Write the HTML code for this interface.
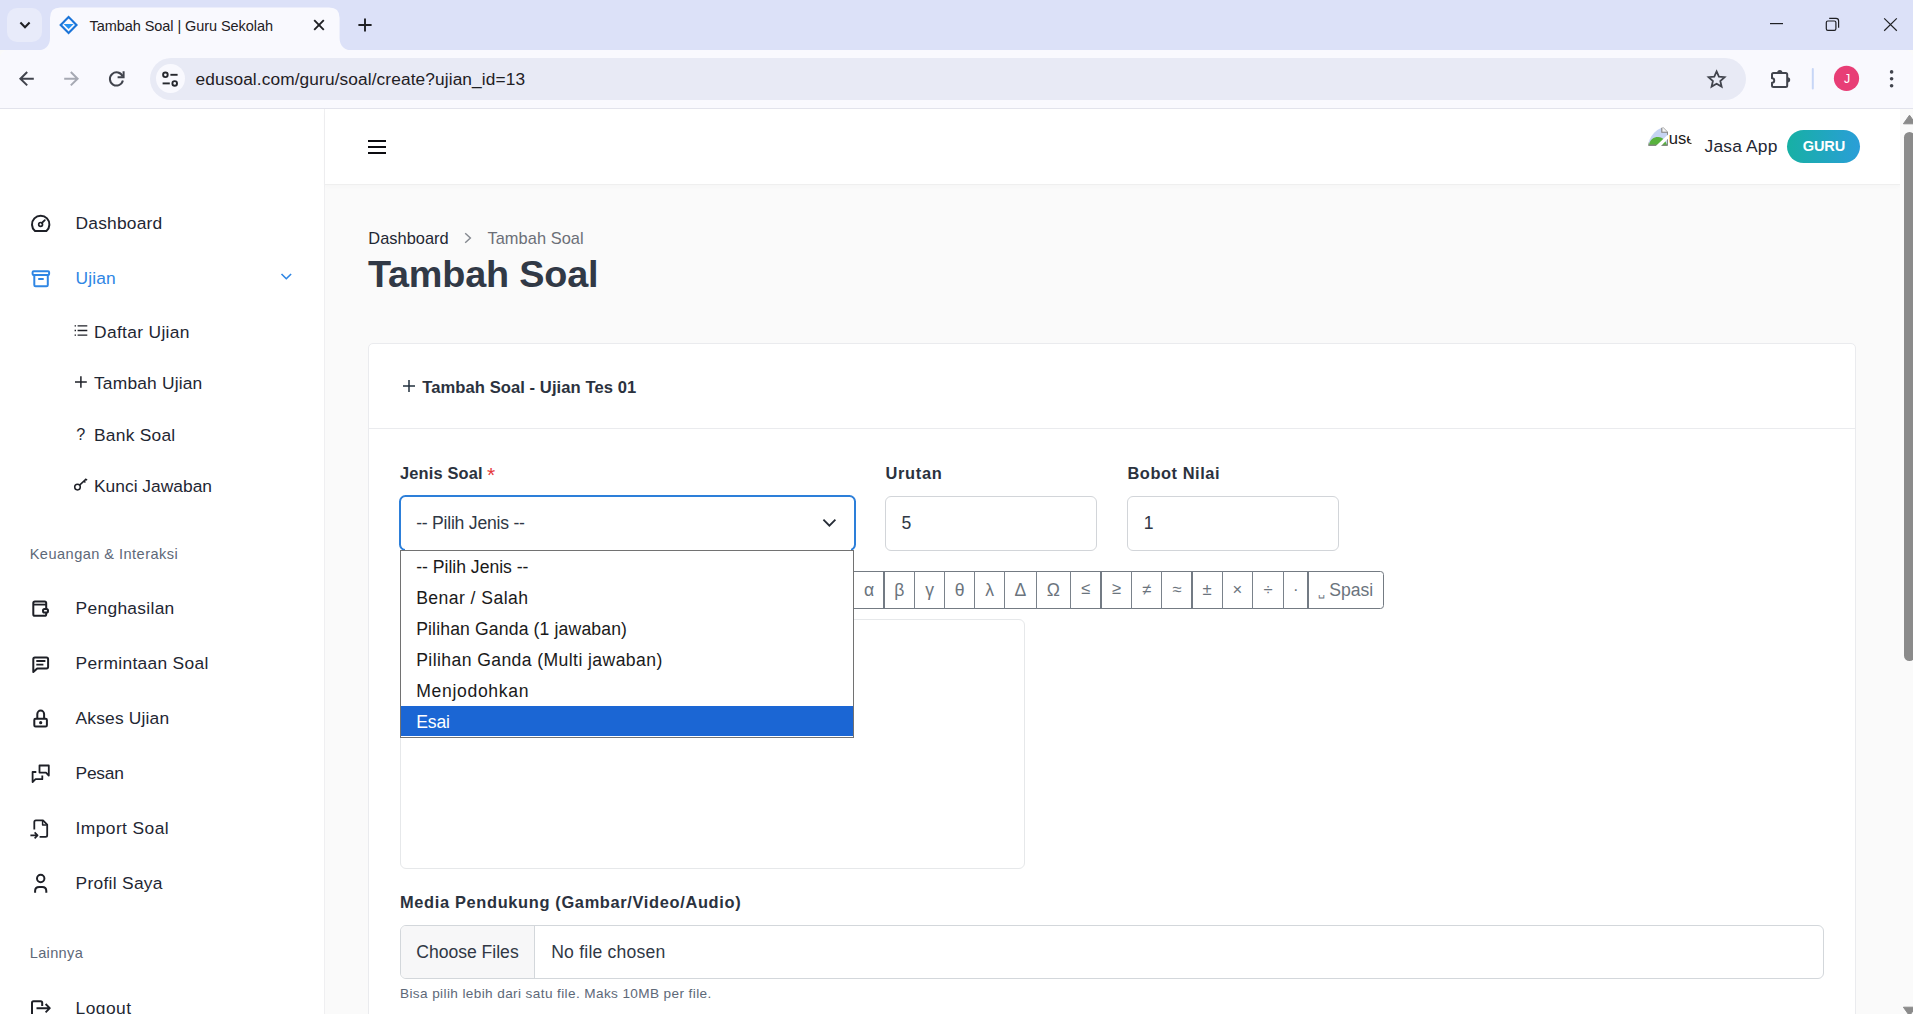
<!DOCTYPE html>
<html lang="id">
<head>
<meta charset="utf-8">
<title>Tambah Soal | Guru Sekolah</title>
<style>
*{box-sizing:border-box;margin:0;padding:0}
html,body{width:1913px;height:1014px;overflow:hidden;background:#fafafa;font-family:"Liberation Sans",sans-serif;color:#22303e}
.a{position:absolute;white-space:nowrap}
.t{position:absolute;white-space:pre;line-height:1}
svg{position:absolute;overflow:visible}
#tabstrip{left:0;top:0;width:1913px;height:50px;background:#dce1f8}
#toolbar{left:0;top:50px;width:1913px;height:58px;background:#f9f9fe;border-radius:8px 8px 0 0}
#tbline{left:0;top:108px;width:1913px;height:1px;background:#e2e3ec}
#tabsearch{left:7px;top:8px;width:34.5px;height:34px;background:#e8ebfa;border-radius:10px}
#urlbar{left:149.5px;top:58.3px;width:1596.5px;height:41.4px;background:#e8eaf5;border-radius:21px}
#sitechip{left:155.8px;top:64.4px;width:29px;height:29px;background:#f9f9fe;border-radius:50%}
#sidebar{left:0;top:109px;width:325px;height:905px;background:#fff;border-right:1px solid #efeff1}
#header{left:325px;top:109px;width:1575px;height:76px;background:#fff;border-bottom:1px solid #efefef;box-shadow:0 2px 4px rgba(0,0,0,.018)}
#card{left:368px;top:343px;width:1488px;height:700px;background:#fff;border:1px solid #eaebee;border-radius:5px}
#cardline{left:369px;top:428px;width:1486px;height:1px;background:#eaebee}
</style>
</head>
<body>
<!-- ===== Browser chrome ===== -->
<div class="a" id="tabstrip"></div>
<div class="a" id="toolbar"></div>
<svg style="left:0;top:0" width="400" height="51" viewBox="0 0 400 51"><path d="M36.5 50.5 C45 50.5 50 46 50 38 V18 Q50 7.6 60.4 7.6 H329.2 Q339.6 7.6 339.6 18 V38 C339.6 46 344.6 50.5 353 50.5 Z" fill="#f9f9fe"/></svg>
<div class="a" id="tabsearch"></div>
<div class="a" id="tbline"></div>
<div class="a" id="urlbar"></div>
<div class="a" id="sitechip"></div>
<svg style="left:0;top:0" width="1913" height="109" viewBox="0 0 1913 109" fill="none" stroke="#1f2024" stroke-width="2" stroke-linecap="butt" stroke-linejoin="miter">
<!-- tab search chevron -->
<path d="M20.4 22.6 L25 27.2 L29.6 22.6" stroke-width="2.1"/>
<!-- favicon -->
<g stroke="none">
<path d="M68.6 15.4 L78 24.9 L68.6 34.4 L59.2 24.9 Z" fill="#1b74d8"/>
<path d="M68.6 18.4 L75 24.9 L68.6 31.4 L62.2 24.9 Z" fill="#f9f9fe"/>
<path d="M63.6 24 H73.6 L68.6 29 Z" fill="#2491f2"/>
<path d="M65.6 22 L68.6 19 L71.6 22 Z" fill="#f9f9fe"/>
</g>
<!-- tab close -->
<path d="M314.2 20.2 L323.8 29.8 M323.8 20.2 L314.2 29.8" stroke-width="1.9"/>
<!-- new tab -->
<path d="M365 18.4 V31.6 M358.4 25 H371.6" stroke-width="1.9"/>
<!-- window controls -->
<path d="M1770 23.6 H1783" stroke-width="1.2"/>
<rect x="1826.3" y="21" width="9.6" height="9.4" rx="1.6" stroke-width="1.2"/>
<path d="M1829.2 18.4 H1836 Q1838.6 18.4 1838.6 21 V27.8" stroke-width="1.2"/>
<path d="M1884.2 18.4 L1896.8 30.8 M1896.8 18.4 L1884.2 30.8" stroke-width="1.2"/>
<!-- back -->
<g stroke="#41444d" stroke-width="2">
<path d="M33.8 78.7 H21 M27.2 72 L20.4 78.7 L27.2 85.4"/>
</g>
<!-- forward -->
<g stroke="#a6a9b3" stroke-width="2">
<path d="M64.2 78.7 H77 M70.8 72 L77.6 78.7 L70.8 85.4"/>
</g>
<!-- reload -->
<g stroke="#41444d" stroke-width="2">
<path d="M122.6 76.4 A6.6 6.6 0 1 0 122.9 80.6"/>
<path d="M123.6 71.2 V77.2 H117.6" />
</g>
<!-- site settings (tune) -->
<g stroke="#26282e" stroke-width="1.9">
<circle cx="165.4" cy="74.8" r="2.3"/>
<path d="M170.4 74.8 H177.6"/>
<circle cx="174.7" cy="83.4" r="2.3"/>
<path d="M162.6 83.4 H169.8"/>
</g>
<!-- star -->
<path d="M1716.6 71.4 L1718.9 76.6 L1724.6 77.2 L1720.3 81 L1721.6 86.6 L1716.6 83.7 L1711.6 86.6 L1712.9 81 L1708.6 77.2 L1714.3 76.6 Z" stroke="#41444d" stroke-width="1.8" stroke-linejoin="miter"/>
<!-- extensions puzzle -->
<path d="M1773.5 72.9 H1785.7 Q1787.2 72.9 1787.2 74.4 V85.5 Q1787.2 87 1785.7 87 H1773.5 Q1772 87 1772 85.5 V82.7 A2.2 2.2 0 0 0 1772 78.3 V74.4 Q1772 72.9 1773.5 72.9 Z" stroke="#41444d" stroke-width="2" stroke-linejoin="round"/>
<path d="M1777.2 72.6 A2.6 2.6 0 0 1 1782.4 72.6 Z M1787.6 77.2 A2.6 2.6 0 0 1 1787.6 82.4 Z" fill="#41444d" stroke="none"/>
<!-- separator -->
<path d="M1812.8 69 V88.4" stroke="#c7d6f6" stroke-width="2" stroke-linecap="round"/>
<!-- avatar -->
<circle cx="1846.5" cy="78.4" r="12.6" fill="#e83e76" stroke="none"/>
<!-- menu dots -->
<g fill="#41444d" stroke="none"><circle cx="1891.6" cy="71.9" r="1.8"/><circle cx="1891.6" cy="78.8" r="1.8"/><circle cx="1891.6" cy="85.7" r="1.8"/></g>
</svg>

<!-- ===== Page ===== -->
<div class="a" id="sidebar"></div>
<div class="a" id="header"></div>
<div class="a" id="card"></div>
<div class="a" id="cardline"></div>
<div class="a" style="left:367.5px;top:139.6px;width:18.8px;height:2.1px;background:#0c0c10"></div>
<div class="a" style="left:367.5px;top:145.9px;width:18.8px;height:2.1px;background:#0c0c10"></div>
<div class="a" style="left:367.5px;top:152.1px;width:18.8px;height:2.1px;background:#0c0c10"></div>
<div class="a" style="left:1786.7px;top:129.7px;width:73.3px;height:33.3px;border-radius:17px;background:linear-gradient(90deg,#17b0a4,#2a9ed8)"></div>
<div class="a" style="left:400px;top:619px;width:625.0px;height:250.0px;border:1px solid #e6e8ea;border-radius:6px;background:#fff"></div>
<div class="a" style="left:885px;top:496px;width:212.3px;height:55.0px;border:1px solid #d2d5d9;border-radius:6px;background:#fff"></div>
<div class="a" style="left:1127px;top:496px;width:212.0px;height:55.0px;border:1px solid #d2d5d9;border-radius:6px;background:#fff"></div>
<div class="a" style="left:700px;top:571px;width:684.0px;height:38px;border:1px solid #747b83;border-radius:3.5px;background:#fff"></div>
<div class="a" style="left:853px;top:571px;width:1.0px;height:38.0px;background:#7a828b"></div>
<div class="a" style="left:883px;top:571px;width:2.0px;height:38.0px;background:#737b84"></div>
<div class="a" style="left:914px;top:571px;width:1.0px;height:38.0px;background:#7a828b"></div>
<div class="a" style="left:944px;top:571px;width:1.0px;height:38.0px;background:#7a828b"></div>
<div class="a" style="left:974px;top:571px;width:1.0px;height:38.0px;background:#7a828b"></div>
<div class="a" style="left:1004px;top:571px;width:1.0px;height:38.0px;background:#7a828b"></div>
<div class="a" style="left:1036px;top:571px;width:1.0px;height:38.0px;background:#7a828b"></div>
<div class="a" style="left:1070px;top:571px;width:1.0px;height:38.0px;background:#7a828b"></div>
<div class="a" style="left:1100px;top:571px;width:2.0px;height:38.0px;background:#737b84"></div>
<div class="a" style="left:1131px;top:571px;width:1.0px;height:38.0px;background:#7a828b"></div>
<div class="a" style="left:1161px;top:571px;width:1.0px;height:38.0px;background:#7a828b"></div>
<div class="a" style="left:1191px;top:571px;width:2.0px;height:38.0px;background:#737b84"></div>
<div class="a" style="left:1222px;top:571px;width:1.0px;height:38.0px;background:#7a828b"></div>
<div class="a" style="left:1252px;top:571px;width:1.0px;height:38.0px;background:#7a828b"></div>
<div class="a" style="left:1283px;top:571px;width:1.0px;height:38.0px;background:#7a828b"></div>
<div class="a" style="left:1307px;top:571px;width:2.0px;height:38.0px;background:#737b84"></div>
<div class="a" style="left:400px;top:925px;width:1424.0px;height:53.5px;border:1px solid #d3d7db;border-radius:6px;background:#fff"></div>
<div class="a" style="left:401px;top:926px;width:133.5px;height:51.5px;background:#f7f7f8;border-radius:5px 0 0 5px;border-right:1px solid #d3d7db"></div>
<div class="a" style="left:398.8px;top:494.8px;width:457.4px;height:56.2px;border:2.2px solid #2d7fd9;border-radius:6.5px;background:#fff"></div>
<div class="a" style="left:405px;top:548px;width:446.0px;height:2.2px;background:#fff"></div>
<div class="a" style="left:400px;top:550px;width:454.0px;height:188.0px;border:1px solid #727272;background:#fff"></div>
<div class="a" style="left:401px;top:706px;width:452.0px;height:30.3px;background:#1b66d4"></div>

<svg style="left:0;top:109px" width="325" height="905" viewBox="0 109 325 905" fill="none" stroke="#1e2027" stroke-width="2" stroke-linecap="butt" stroke-linejoin="round">
<!-- dashboard (tachometer) -->
<path d="M35 231 A8.7 8.7 0 1 1 46.4 231 Z"/>
<circle cx="40.6" cy="224.4" r="1.9" stroke-width="1.7"/>
<path d="M41.8 223 L44.8 220.2" stroke-width="1.8" stroke-linecap="round"/>
<!-- ujian (archive) -->
<g stroke="#2f86e4">
<rect x="32.6" y="271.2" width="16.5" height="3.8" rx="1"/>
<path d="M34.3 275 V285 Q34.3 286.3 35.6 286.3 H46.5 Q47.8 286.3 47.8 285 V275"/>
<path d="M38.2 279 H43.7"/>
<path d="M281.5 274 L286.3 278.8 L291.1 274" stroke-width="1.6"/>
</g>
<!-- sub: list -->
<g stroke-width="1.4">
<path d="M77.6 325.9 H87.3 M77.6 330.5 H87.3 M77.6 335.1 H87.3"/>
<path d="M74.6 325.9 H76 M74.6 330.5 H76 M74.6 335.1 H76"/>
</g>
<!-- sub: plus -->
<path d="M80.9 376.2 V387.8 M75 382 H86.8" stroke-width="1.5"/>
<!-- sub: key -->
<g stroke-width="1.5">
<circle cx="77.5" cy="487.1" r="2.8"/>
<path d="M79.6 485.1 L86.3 478.9 M84 480.9 L85.4 482.5 M86 479.2 L87 480.3"/>
</g>
<!-- wallet -->
<path d="M33.3 603 Q33.3 601.4 34.9 601.4 H44.6 Q46.2 601.4 46.2 603 V614.2 Q46.2 615.8 44.6 615.8 H34.9 Q33.3 615.8 33.3 614.2 Z"/>
<path d="M33.3 604.6 H46.2" stroke-width="1.8"/>
<rect x="43" y="609" width="5" height="3.6" rx="1.6" fill="#fff"/>
<!-- message detail -->
<path d="M33.3 672 V659.2 Q33.3 657.6 34.9 657.6 H46.5 Q48.1 657.6 48.1 659.2 V666.8 Q48.1 668.4 46.5 668.4 H37.2 Z"/>
<path d="M36.3 661 H45.4 M36.3 664.6 H43.4" stroke-width="1.8"/>
<!-- lock -->
<rect x="34.3" y="718.8" width="12.6" height="7.8" rx="1.3"/>
<path d="M37.3 718.8 V714 A3.4 3.4 0 0 1 44.1 714 V718.8"/>
<circle cx="40.7" cy="722.7" r="1.6" fill="#1e2027" stroke="none"/>
<!-- chat / conversation -->
<g stroke-width="1.8">
<path d="M39.5 765.5 H48.8 V775.6 L46 772.6 H39.5 Z"/>
<path d="M36.3 772 H32.6 V782 L35.6 779.2 H42.3 V775.4"/>
</g>
<!-- import -->
<g stroke-width="1.8">
<path d="M34.3 829.6 V822 Q34.3 820.4 35.9 820.4 H43 L47.2 824.6 V835.2 Q47.2 836.8 45.6 836.8 H39.6"/>
<path d="M42.6 820.8 V825 H46.8" stroke-width="1.5"/>
<path d="M30.4 835.4 H37.4 M34.6 832.4 L37.6 835.4 L34.6 838.4" stroke-width="1.6"/>
</g>
<!-- user -->
<circle cx="40.7" cy="878.5" r="3.7"/>
<path d="M35.1 892.8 V891 Q35.1 886.9 39.2 886.9 H42.2 Q46.3 886.9 46.3 891 V892.8"/>
<!-- logout -->
<path d="M42.2 1006 V1002.8 Q42.2 1001.3 40.7 1001.3 H33.5 Q32 1001.3 32 1002.8 V1014"/>
<path d="M36.5 1008.2 H49.5 M45.6 1004 L49.8 1008.2 L45.6 1012.4" stroke-width="1.9"/>
</svg>

<div id="chrome-text">
<div class="t" style="left:89.6px;top:19.05px;font-size:14.5px;color:#1f2024;letter-spacing:-0.069px;">Tambah Soal | Guru Sekolah</div>
<div class="t" style="left:195.5px;top:70.65px;font-size:17.3px;color:#1f2024;letter-spacing:0.110px;">edusoal.com/guru/soal/create?ujian_id=13</div>
<div class="t" style="left:1843.9px;top:73.05px;font-size:12.5px;color:#ffffff;">J</div>
</div>
<nav id="menu">
<div class="t" style="left:75.6px;top:214.60px;font-size:17.4px;color:#1f2733;letter-spacing:0.190px;">Dashboard</div>
<div class="t" style="left:75.6px;top:269.60px;font-size:17.4px;color:#2f86e4;letter-spacing:0.090px;">Ujian</div>
<div class="t" style="left:94.0px;top:323.60px;font-size:17.4px;color:#1f2733;letter-spacing:0.334px;">Daftar Ujian</div>
<div class="t" style="left:94.0px;top:374.60px;font-size:17.4px;color:#1f2733;letter-spacing:0.178px;">Tambah Ujian</div>
<div class="t" style="left:94.0px;top:426.60px;font-size:17.4px;color:#1f2733;letter-spacing:0.240px;">Bank Soal</div>
<div class="t" style="left:94.0px;top:477.60px;font-size:17.4px;color:#1f2733;letter-spacing:0.004px;">Kunci Jawaban</div>
<div class="t" style="left:29.7px;top:547.00px;font-size:14.6px;color:#5d6878;letter-spacing:0.450px;">Keuangan &amp; Interaksi</div>
<div class="t" style="left:75.6px;top:599.60px;font-size:17.4px;color:#1f2733;letter-spacing:0.297px;">Penghasilan</div>
<div class="t" style="left:75.6px;top:654.60px;font-size:17.4px;color:#1f2733;letter-spacing:0.294px;">Permintaan Soal</div>
<div class="t" style="left:75.6px;top:709.60px;font-size:17.4px;color:#1f2733;letter-spacing:0.167px;">Akses Ujian</div>
<div class="t" style="left:75.6px;top:764.60px;font-size:17.4px;color:#1f2733;letter-spacing:-0.253px;">Pesan</div>
<div class="t" style="left:75.6px;top:819.60px;font-size:17.4px;color:#1f2733;letter-spacing:0.406px;">Import Soal</div>
<div class="t" style="left:75.6px;top:874.60px;font-size:17.4px;color:#1f2733;letter-spacing:0.281px;">Profil Saya</div>
<div class="t" style="left:29.7px;top:946.00px;font-size:14.6px;color:#5d6878;letter-spacing:0.329px;">Lainnya</div>
<div class="t" style="left:75.6px;top:999.60px;font-size:17.4px;color:#1f2733;letter-spacing:0.439px;">Logout</div>
<div class="t" style="left:76.3px;top:426.20px;font-size:16.2px;color:#1f2733;">?</div>
</nav>
<header id="topbar">
<div class="t" style="left:1704.6px;top:137.60px;font-size:17.4px;color:#1f2733;letter-spacing:0.177px;">Jasa App</div>
<div class="t" style="left:1802.8px;top:139.00px;font-size:14.6px;font-weight:700;color:#ffffff;letter-spacing:-0.195px;">GURU</div>
</header>
<main id="content">
<div class="t" style="left:368.3px;top:230.10px;font-size:16.4px;color:#1f2733;letter-spacing:0.027px;">Dashboard</div>
<div class="t" style="left:487.4px;top:230.10px;font-size:16.4px;color:#6b6f77;letter-spacing:0.063px;">Tambah Soal</div>
<div class="t" style="left:367.9px;top:256.40px;font-size:37.8px;font-weight:700;color:#313946;letter-spacing:-0.174px;">Tambah Soal</div>
<div class="t" style="left:422.2px;top:379.50px;font-size:16.6px;font-weight:700;color:#2b323e;letter-spacing:0.064px;">Tambah Soal - Ujian Tes 01</div>
<div class="t" style="left:400.0px;top:465.10px;font-size:16.4px;font-weight:700;color:#2b323e;letter-spacing:0.156px;">Jenis Soal</div>
<div class="t" style="left:487.0px;top:464.30px;font-size:21px;color:#e5383b;">*</div>
<div class="t" style="left:885.5px;top:465.10px;font-size:16.4px;font-weight:700;color:#2b323e;letter-spacing:0.694px;">Urutan</div>
<div class="t" style="left:1127.4px;top:465.10px;font-size:16.4px;font-weight:700;color:#2b323e;letter-spacing:0.570px;">Bobot Nilai</div>
<div class="t" style="left:416.2px;top:514.50px;font-size:17.6px;color:#303845;letter-spacing:-0.233px;">-- Pilih Jenis --</div>
<div class="t" style="left:901.4px;top:514.50px;font-size:17.6px;color:#303845;">5</div>
<div class="t" style="left:1143.7px;top:514.50px;font-size:17.6px;color:#303845;">1</div>
<div class="t" style="left:416.2px;top:558.50px;font-size:17.6px;color:#1a1a1a;letter-spacing:-0.008px;">-- Pilih Jenis --</div>
<div class="t" style="left:416.2px;top:589.50px;font-size:17.6px;color:#1a1a1a;letter-spacing:0.431px;">Benar / Salah</div>
<div class="t" style="left:416.2px;top:620.50px;font-size:17.6px;color:#1a1a1a;letter-spacing:0.143px;">Pilihan Ganda (1 jawaban)</div>
<div class="t" style="left:416.2px;top:651.50px;font-size:17.6px;color:#1a1a1a;letter-spacing:0.406px;">Pilihan Ganda (Multi jawaban)</div>
<div class="t" style="left:416.2px;top:682.50px;font-size:17.6px;color:#1a1a1a;letter-spacing:0.666px;">Menjodohkan</div>
<div class="t" style="left:416.2px;top:713.50px;font-size:17.6px;color:#ffffff;letter-spacing:-0.145px;">Esai</div>
<div class="t" style="left:400.0px;top:894.10px;font-size:16.4px;font-weight:700;color:#2b323e;letter-spacing:0.659px;">Media Pendukung (Gambar/Video/Audio)</div>
<div class="t" style="left:416.2px;top:943.50px;font-size:17.6px;color:#303845;letter-spacing:-0.017px;">Choose Files</div>
<div class="t" style="left:551.2px;top:943.50px;font-size:17.6px;color:#303845;letter-spacing:0.208px;">No file chosen</div>
<div class="t" style="left:400.0px;top:987.00px;font-size:13.6px;color:#5d6878;letter-spacing:0.385px;">Bisa pilih lebih dari satu file. Maks 10MB per file.</div>
<div class="t" style="left:863.9px;top:581.50px;font-size:17.6px;color:#6b747d;">α</div>
<div class="t" style="left:894.3px;top:581.50px;font-size:17.6px;color:#6b747d;">β</div>
<div class="t" style="left:925.2px;top:581.50px;font-size:17.6px;color:#6b747d;">γ</div>
<div class="t" style="left:954.7px;top:581.50px;font-size:17.6px;color:#6b747d;">θ</div>
<div class="t" style="left:985.2px;top:581.50px;font-size:17.6px;color:#6b747d;">λ</div>
<div class="t" style="left:1014.6px;top:581.50px;font-size:17.6px;color:#6b747d;">Δ</div>
<div class="t" style="left:1046.7px;top:581.50px;font-size:17.6px;color:#6b747d;">Ω</div>
<div class="t" style="left:1081.1px;top:580.50px;font-size:16.6px;color:#6b747d;">≤</div>
<div class="t" style="left:1111.8px;top:580.50px;font-size:16.6px;color:#6b747d;">≥</div>
<div class="t" style="left:1142.0px;top:581.50px;font-size:16.6px;color:#6b747d;">≠</div>
<div class="t" style="left:1172.2px;top:581.50px;font-size:16.6px;color:#6b747d;">≈</div>
<div class="t" style="left:1202.6px;top:581.50px;font-size:16.6px;color:#6b747d;">±</div>
<div class="t" style="left:1232.6px;top:581.50px;font-size:16.6px;color:#6b747d;">×</div>
<div class="t" style="left:1263.5px;top:581.50px;font-size:16.6px;color:#6b747d;">÷</div>
<div class="t" style="left:1293.1px;top:581.50px;font-size:16.6px;color:#6b747d;">·</div>
<div class="t" style="left:1317.5px;top:586.80px;font-size:11px;color:#6b747d;font-family:"DejaVu Sans",sans-serif;">␣</div>
<div class="t" style="left:1329.3px;top:581.50px;font-size:17.6px;color:#6b747d;letter-spacing:-0.054px;">Spasi</div>
</main>
<!-- scrollbar -->
<div class="a" style="left:1900px;top:109px;width:13px;height:905px;background:#fafafa"></div>
<div class="a" style="left:1904px;top:132px;width:11px;height:529px;background:#8b8b8b;border-radius:5.5px"></div>
<svg style="left:1900px;top:109px" width="13" height="905" viewBox="0 0 13 905"><path d="M3.4 14.8 L9.5 6.2 L15.6 14.8 Z" fill="#8b8b8b" stroke="#8b8b8b" stroke-width="1" stroke-linejoin="round"/><path d="M3.4 898.2 L9.5 906.8 L15.6 898.2 Z" fill="#8b8b8b" stroke="#8b8b8b" stroke-width="1" stroke-linejoin="round"/></svg>
<!-- avatar (broken image with alt text) -->
<div class="a" style="left:1648px;top:126px;width:44px;height:44px;border-radius:50%;overflow:hidden">
<svg style="left:0;top:0" width="20" height="20" viewBox="0 0 20 20"><path d="M0.5 0.5 H14 L19.5 6 V19.5 H0.5 Z" fill="#fff" stroke="#8c8c8c" stroke-width="1"/><path d="M1 1 H13.5 V6.5 H19 V19 H1 Z" fill="#c6d4f3"/><path d="M13.8 0.8 V6.2 H19.2" fill="#f4f4f4" stroke="#7d7d7d" stroke-width="1.1"/><path d="M1 19 C2 12 9 9.6 14 12 C16.5 13.4 18 16 19 19 Z" fill="#58b23d"/><path d="M0.5 19 H19.5" stroke="#7b8a76" stroke-width="1"/><path d="M20 8.4 L7.8 20 H13 L20 12.8 Z" fill="#fff"/></svg>
<div class="t" style="left:20.8px;top:4.7px;font-size:16.6px;color:#1b1b1b">user</div>
</div>
<!-- hamburger drawn in shapes; breadcrumb chevron -->
<svg style="left:461px;top:231px" width="14" height="14" viewBox="0 0 14 14"><path d="M4.2 2.2 L9.4 7 L4.2 11.8" fill="none" stroke="#84888f" stroke-width="1.4"/></svg>
<!-- card header plus -->
<svg style="left:403px;top:380px" width="12" height="12" viewBox="0 0 12 12"><path d="M6 0 V12 M0 6 H12" fill="none" stroke="#22303e" stroke-width="1.5"/></svg>
<!-- select chevron -->
<svg style="left:822px;top:517px" width="15" height="12" viewBox="0 0 15 12"><path d="M1.4 2.7 L7.4 8.7 L13.4 2.7" fill="none" stroke="#262c36" stroke-width="1.8"/></svg>

</body>
</html>
